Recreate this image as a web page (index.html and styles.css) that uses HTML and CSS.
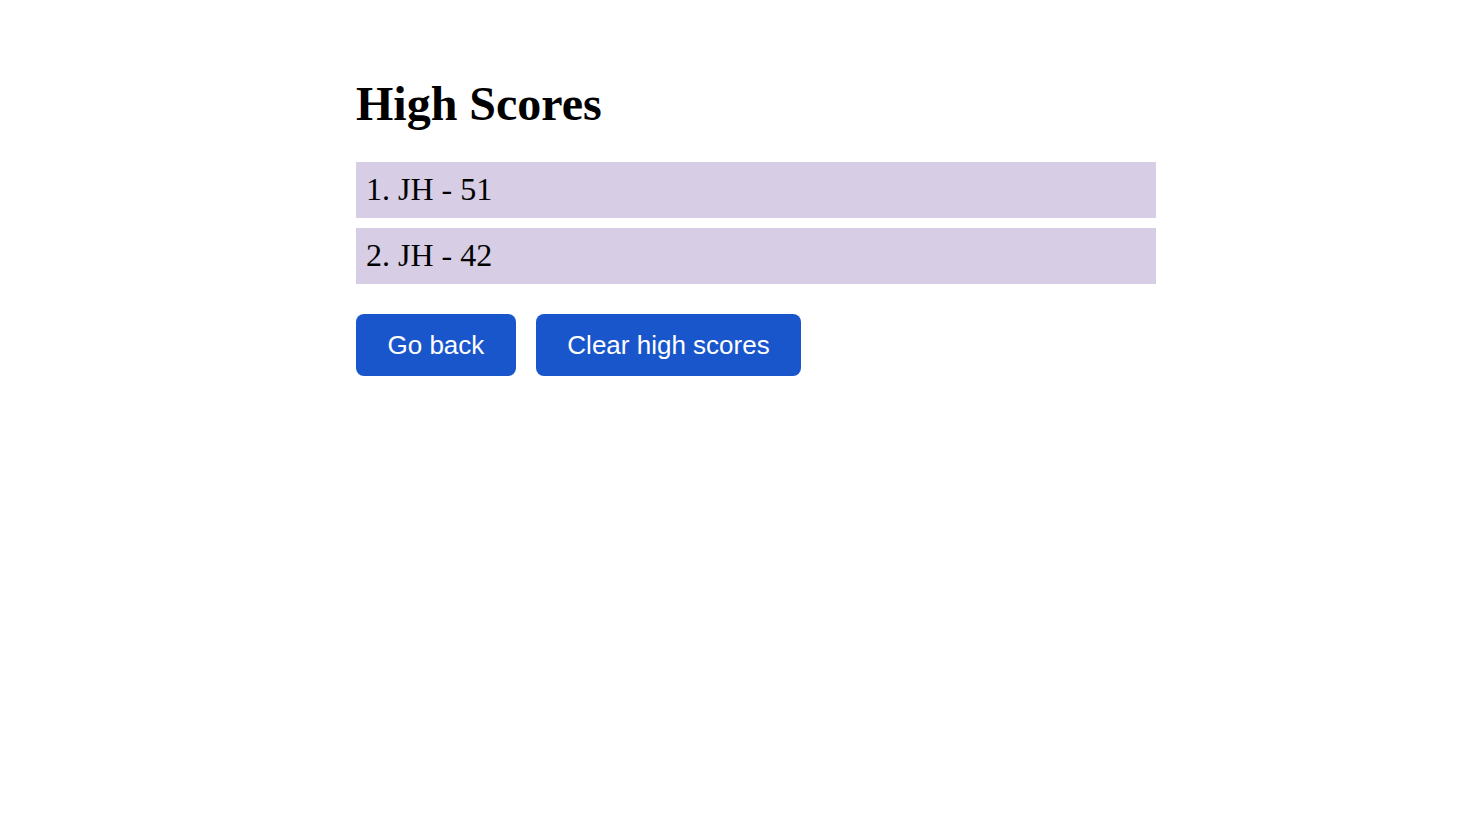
FILE: index.html
```html
<!DOCTYPE html>
<html lang="en">
<head>
<meta charset="utf-8">
<title>High Scores</title>
<link rel="stylesheet" href="styles.css">
</head>
<body>
<main class="page">
  <h1 class="title">High Scores</h1>
  <ol class="scores">
    <li class="score">1. JH - 51</li>
    <li class="score">2. JH - 42</li>
  </ol>
  <div class="actions">
    <button class="btn">Go back</button>
    <button class="btn">Clear high scores</button>
  </div>
</main>
</body>
</html>
```
FILE: styles.css
```css
html, body {
  margin: 0;
  padding: 0;
  background: #ffffff;
}
body {
  font-family: "Liberation Serif", "Times New Roman", serif;
  color: #000;
}
.page {
  width: 800px;
  margin: 0 auto;
  padding-left: 32px;
  padding-top: 76px;
}
.title {
  font-size: 48px;
  font-weight: bold;
  margin: 0 0 31px 0;
  line-height: 55px;
}
.scores {
  list-style: none;
  margin: 0;
  padding: 0;
  display: flex;
  flex-direction: column;
  gap: 10px;
}
.score {
  background: #d7cde5;
  font-size: 32px;
  line-height: 36px;
  padding: 9px 10px 11px;
}
.actions {
  display: flex;
  gap: 20px;
  margin-top: 30px;
}
.btn {
  font-family: "Liberation Sans", Arial, sans-serif;
  font-size: 26px;
  line-height: 30px;
  color: #ffffff;
  background: #1956cc;
  border: none;
  border-radius: 8px;
  padding: 16px 31.5px;
  cursor: pointer;
}
```
